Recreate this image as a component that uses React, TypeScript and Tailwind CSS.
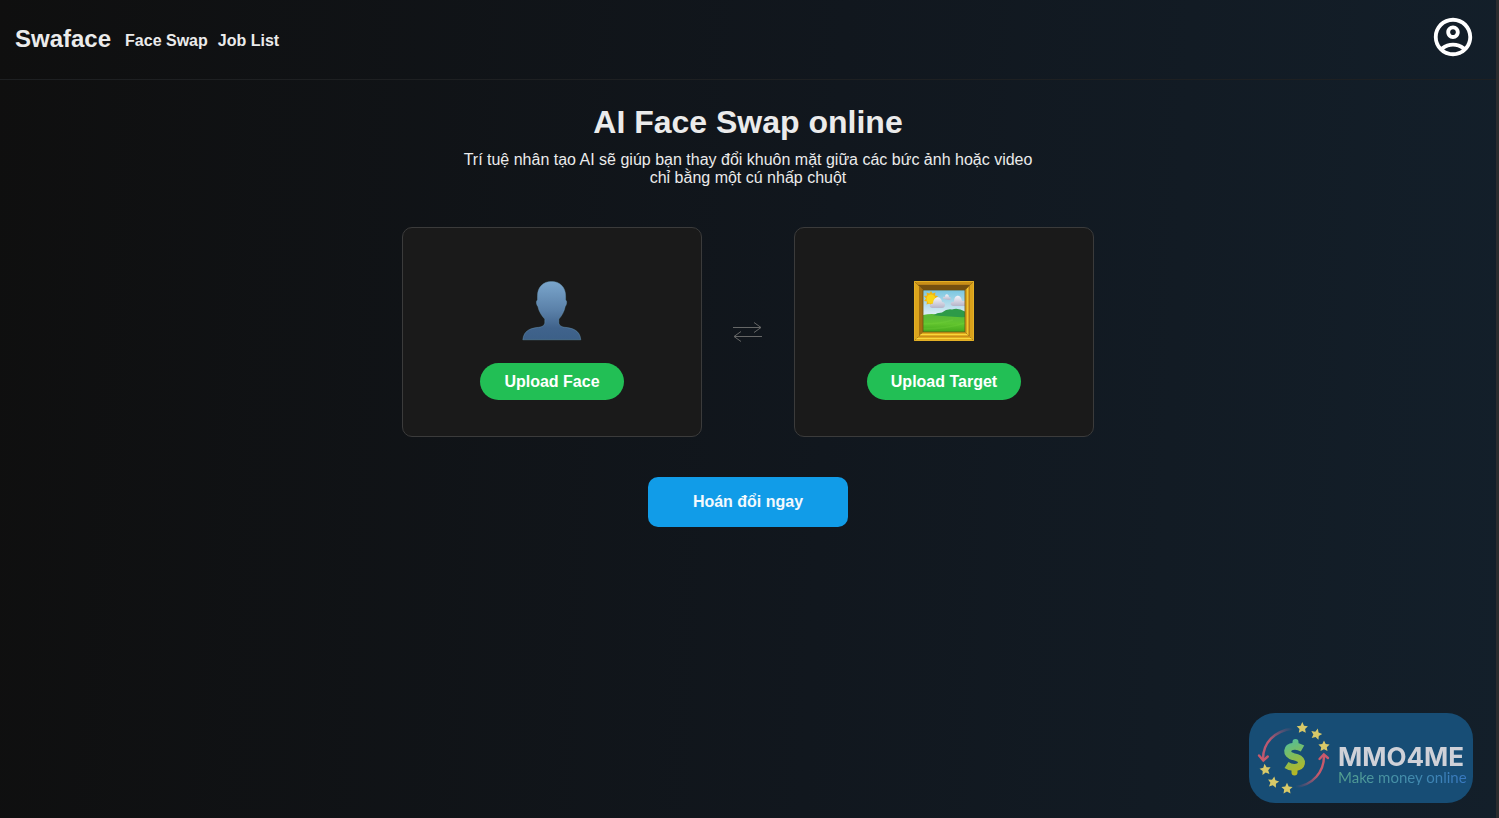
import { useState } from "react";
import type { ReactNode } from "react";
import { MdOutlineAccountCircle } from "react-icons/md";

const STAR = "M0-5.900 1.700-2.300 5.600-1.800 2.800.900 3.500 4.800 0 2.900-3.500 4.800-2.800.900-5.600-1.800-1.700-2.300Z";

const stars = [
  { x: 45.3, y: 12, r: 0 },
  { x: 59.3, y: 18.3, r: 15 },
  { x: 67, y: 30.3, r: 0 },
  { x: 8.3, y: 53.7, r: -8 },
  { x: 16.3, y: 66.3, r: 10 },
  { x: 30, y: 72.7, r: 0 },
];

function PersonIcon() {
  return (
    <svg viewBox="0 0 60 60" className="size-15" aria-hidden="true">
      <defs>
        <linearGradient id="person" x1="0" y1="0" x2="0" y2="1">
          <stop offset="0" stopColor="#7ba6cc" />
          <stop offset="0.5" stopColor="#5a80a8" />
          <stop offset="0.8" stopColor="#40638c" />
          <stop offset="1" stopColor="#3c6088" />
        </linearGradient>
      </defs>
      <path
        d="M29.500 .4c-8.500 0-14 6-14 14.200v4.500c-1.600.7-1.300 4.500.4 6.500 1 5 4 9.500 6.900 12.500v3.500c0 2.500-2.500 4.300-6 4.700-7 .8-15 2.300-16 12.500h58c-1-10.200-9-11.700-16-12.500-3.500-.4-6-2.200-6-4.700v-3.500c2.900-3 5.400-7.500 6.400-12.500 1.700-2 2-5.800.4-6.500v-4.500c0-8.200-5.600-14.200-14.100-14.200Z"
        fill="url(#person)"
        stroke="#6f9fbd"
        strokeOpacity="0.5"
        strokeWidth="0.8"
      />
    </svg>
  );
}

function PictureIcon() {
  return (
    <svg viewBox="0 0 60 60" className="size-15" aria-hidden="true">
      <defs>
        <linearGradient id="sky" x1="0" y1="0" x2="0" y2="1">
          <stop offset="0" stopColor="#79c5df" />
          <stop offset="0.6" stopColor="#dfeef5" />
        </linearGradient>
        <linearGradient id="grass" x1="0" y1="0" x2="0" y2="1">
          <stop offset="0" stopColor="#58b83a" />
          <stop offset="0.5" stopColor="#62c42e" />
          <stop offset="1" stopColor="#43a91d" />
        </linearGradient>
        <linearGradient id="cloud" x1="0" y1="0" x2="0" y2="1">
          <stop offset="0" stopColor="#f4f3f9" />
          <stop offset="1" stopColor="#b5b5c9" />
        </linearGradient>
      </defs>
      {/* frame, one mitred piece per side */}
      <path d="M0 0h60L51 9H9Z" fill="#c98f16" />
      <path d="M0 0v60l9-9V9Z" fill="#dba41c" />
      <path d="M60 0v60l-9-9V9Z" fill="#d9a21b" />
      <path d="M0 60h60l-9-9H9Z" fill="#e0a91c" />
      <path d="M.5.500h59v59H.5Z" fill="none" stroke="#e3b026" />
      <path d="M4 4h52L51 9H9Z" fill="#75500f" />
      <path d="M5 5v50l4-4V9Z" fill="#a46f11" />
      <path d="M4 3.500h52" stroke="#b9821a" />
      <path d="M2.500 57.500h55M6.500 53.500h47" stroke="#f8d73e" />
      <path d="M4 55.500h52" stroke="#c99019" />
      <path d="M53.500 7v46" stroke="#efc533" />
      <path d="M55.500 5v50" stroke="#b9801a" />
      <path d="M9 9h42v42H9Z" fill="url(#sky)" />
      <path d="M9 34q9-2 17 0t25-2v19H9Z" fill="url(#grass)" />
      <path d="M19 34.500q4-3 9-3 5-4 10-3 6-2 13 2v6q-14-1-32-2Z" fill="#2d9a48" />
      <path d="M9 36q12-3 23 0t19 0v15H9Z" fill="url(#grass)" />
      <path d="M9 43q16 0 30-4M9 48q24 0 42-6" stroke="#83db47" strokeWidth="1.500" fill="none" opacity="0.2" />
      <path
        d="m17 10 1.500 2.500 3-1-.5 3 3 .5-2 2.500 2 2.500-3 .5.5 3-3-1-1.500 2.500-1.500-2.500-3 1 .5-3-3-.5 2-2.500-2-2.500 3-.5-.5-3 3 1Z"
        fill="#f2b510"
      />
      <circle cx="17" cy="18" r="4.500" fill="#f8d519" />
      <path d="M18 27c-4-1-2-5 1-4 0-8 8-9 9-2 4 0 4 6 0 6Z" fill="url(#cloud)" />
      <path d="M30 18c-2 0-1-3 1-2 0-4 4-3 4 0 3 0 2 3 0 3Z" fill="url(#cloud)" />
      <path d="M39 25c-4-1-2-5 1-4 0-8 7-8 8-1h3v5Z" fill="url(#cloud)" />
      <path d="M9 9h42v42H9Z" fill="none" stroke="#6d5213" strokeWidth="0.8" />
    </svg>
  );
}

function SwapIcon() {
  return (
    <svg viewBox="0 0 32 32" className="size-8 shrink-0" fill="none" stroke="#666767" aria-hidden="true">
      <path d="M1 11.500h28M22 6.500l7 5-7 5M30 20.500H2M9 15.500l-7 5 7 5" />
    </svg>
  );
}

function Watermark() {
  return (
    <aside className="fixed right-[26px] bottom-[15px] flex h-[90px] w-56 items-center rounded-[26px] bg-[#174d75] pl-2">
      <svg viewBox="0 0 74 84" className="h-[84px] w-[74px] shrink-0" fill="none" aria-hidden="true">
        <defs>
          <linearGradient id="arcDown" x1="1" y1="0" x2="0" y2="1">
            <stop offset="0" stopColor="#bb5870" stopOpacity="0" />
            <stop offset="0.6" stopColor="#bb5870" />
          </linearGradient>
          <linearGradient id="arcUp" x1="0" y1="1" x2="1" y2="0">
            <stop offset="0" stopColor="#bb5870" stopOpacity="0" />
            <stop offset="0.6" stopColor="#c8596b" />
          </linearGradient>
          <linearGradient id="dollar" gradientUnits="userSpaceOnUse" x1="30" y1="24" x2="44" y2="58">
            <stop offset="0" stopColor="#50bf9c" />
            <stop offset="0.5" stopColor="#85bd55" />
            <stop offset="1" stopColor="#bcb51f" />
          </linearGradient>
        </defs>
        <path d="M36 12.500C17 15 6 27 6 43" stroke="url(#arcDown)" strokeWidth="2.400" />
        <path d="m2 39.500 4.300 5 4.500-4" stroke="#c8596b" strokeWidth="2.400" strokeLinecap="round" />
        <path d="M38.500 71C56 69 67 56 67 40" stroke="url(#arcUp)" strokeWidth="2.400" />
        <path d="m62.500 43 4.300-4.500 4.200 3.500" stroke="#c8596b" strokeWidth="2.400" strokeLinecap="round" />
        {stars.map((star) => (
          <path
            key={`${star.x}-${star.y}`}
            d={STAR}
            transform={`translate(${star.x} ${star.y}) rotate(${star.r})`}
            fill="#d8c968"
          />
        ))}
        <g stroke="url(#dollar)" strokeLinejoin="round">
          <path
            d="M45.500 32.500C42 30.500 39 30 37 30.300c-8 .7-8.500 8.200-1 10.200l4 1.200c7 2.300 5.500 9.300-2 9.800-3 .2-6-.8-8.500-2.500"
            strokeWidth="7"
          />
          <path d="M38.500 26v4M37.500 52v4.500" strokeWidth="6" strokeLinecap="round" />
        </g>
      </svg>
      <div className="pt-3.5 pl-[7px]">
        <p className="font-['Inter',sans-serif] text-[26px] leading-6 font-bold text-[#cfd1d8]">MMO4ME</p>
        <p className="bg-linear-to-r from-[#55a18e] to-[#3878c1] bg-clip-text font-['Lato',sans-serif] text-[15px] leading-4 text-transparent">
          Make money online
        </p>
      </div>
    </aside>
  );
}

type UploadCardProps = {
  label: string;
  icon: ReactNode;
};

function UploadCard({ label, icon }: UploadCardProps) {
  return (
    <div className="flex w-[300px] flex-col items-center gap-[22px] rounded-[10px] border border-[#3b3b3b] bg-[#1a1a1a] pt-[53px] pb-9">
      {icon}
      <button type="button" className="rounded-full bg-[#22bf55] px-6 py-2 leading-[21px] font-bold text-white">
        {label}
      </button>
    </div>
  );
}

export default function App() {
  const [swapping, setSwapping] = useState(false);

  return (
    <div className="min-h-screen border-r-3 border-[#2b2c2e] bg-[linear-gradient(93deg,#0f0f0f,#11171e_55%,#131f2a)] font-['Liberation_Sans',Arial,sans-serif] text-[#ebebeb]">
      <header className="flex h-20 items-start justify-between border-b border-[#1e2022] pt-3.5 pr-5 pl-[15px]">
        <nav className="flex items-center pt-2.5 font-bold">
          <a href="#" className="text-2xl leading-[30px]">
            Swaface
          </a>
          <a href="#face-swap" className="pt-1 pl-3.5">
            Face Swap
          </a>
          <a href="#jobs" className="pt-1 pl-2.5">
            Job List
          </a>
        </nav>
        <button type="button" aria-label="Account" className="text-white">
          <MdOutlineAccountCircle size={46} />
        </button>
      </header>

      <main className="flex flex-col items-center px-4 pt-6">
        <h1 className="text-[32px] leading-9 font-bold">AI Face Swap online</h1>
        <p className="mt-[11px] max-w-[580px] text-center leading-[18px]">
          Trí tuệ nhân tạo AI sẽ giúp bạn thay đổi khuôn mặt giữa các bức ảnh hoặc video chỉ bằng một cú nhấp chuột
        </p>
        <div className="mt-10 flex flex-wrap items-center justify-center gap-[30px]">
          <UploadCard label="Upload Face" icon={<PersonIcon />} />
          <SwapIcon />
          <UploadCard label="Upload Target" icon={<PictureIcon />} />
        </div>
        <button
          type="button"
          onClick={() => setSwapping(true)}
          disabled={swapping}
          className="mt-10 h-[50px] w-[200px] rounded-[10px] bg-[#119ce8] font-bold text-[#f3f9fd]"
        >
          Hoán đổi ngay
        </button>
      </main>

      <Watermark />
    </div>
  );
}
